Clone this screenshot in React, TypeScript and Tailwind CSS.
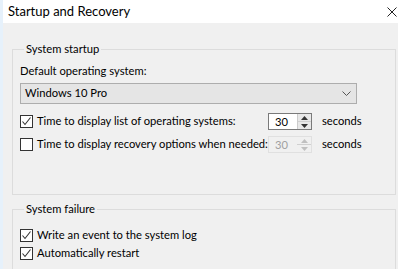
import React from "react";

function CheckBox({ checked }: { checked: boolean }) {
  return (
    <div className="w-[13px] h-[13px] border border-[#333333] bg-white flex items-center justify-center shrink-0">
      {checked && (
        <svg width="11" height="11" viewBox="0 0 11 11">
          <polyline
            points="1.5,5.5 4,8.5 9.5,1.5"
            fill="none"
            stroke="#333333"
            strokeWidth="1.1"
          />
        </svg>
      )}
    </div>
  );
}

function SpinBox({ disabled }: { disabled?: boolean }) {
  const arrow = disabled ? "#c0c0c0" : "#333333";
  return (
    <div
      className={`w-[44px] h-[17px] flex shrink-0 ${
        disabled ? "border border-[#e0e0e0] bg-[#f0f0f0]" : "border border-[#7a7a7a] bg-white"
      }`}
    >
      <div
        className={`flex-1 pl-[6px] leading-[15px] ${
          disabled ? "text-[#a0a0a0]" : "text-black"
        }`}
      >
        30
      </div>
      <div
        className={`w-[14px] flex flex-col ${
          disabled ? "bg-[#f0f0f0]" : "bg-[#e8e8e8] border-l border-[#cccccc]"
        }`}
      >
        <div className="flex-1 flex items-center justify-center border-b border-[#d0d0d0]">
          <svg width="7" height="4" viewBox="0 0 7 4">
            <polygon points="0,4 3.5,0 7,4" fill={arrow} />
          </svg>
        </div>
        <div className="flex-1 flex items-center justify-center">
          <svg width="7" height="4" viewBox="0 0 7 4">
            <polygon points="0,0 3.5,4 7,0" fill={arrow} />
          </svg>
        </div>
      </div>
    </div>
  );
}

export default function App() {
  return (
    <div
      className="w-[398px] h-[269px] overflow-hidden bg-[#f0f0f0] border-l-[3px] border-[#e6f1fb] text-[11.2px] text-black"
      style={{ fontFamily: 'Lato, "Liberation Sans", sans-serif' }}
    >
      <div className="h-[23px] bg-white flex items-center justify-between pl-[5px] pr-[1px]">
        <span className="text-[13px] leading-none">Startup and Recovery</span>
        <svg width="10" height="10" viewBox="0 0 10 10">
          <path d="M0.5 0.5 L9.5 9.5 M9.5 0.5 L0.5 9.5" stroke="#222" strokeWidth="1" />
        </svg>
      </div>

      <div className="pl-[9px] pr-[2px] pt-[18px]">
        <fieldset className="min-w-0 border border-[#dcdcdc] h-[154px] pl-[7px] pr-[38px]">
          <legend className="ml-[4px] px-[2px] leading-[16px]">System startup</legend>
          <div className="mt-[6px] leading-[16px]">Default operating system:</div>
          <div className="mt-[4px] h-[21px] border border-[#adadad] bg-[#e5e5e5] flex items-center justify-between pl-[4px] pr-[5px]">
            <span>Windows 10 Pro</span>
            <svg width="9" height="5" viewBox="0 0 9 5">
              <polyline points="0.5,0.5 4.5,4.5 8.5,0.5" fill="none" stroke="#555" strokeWidth="1" />
            </svg>
          </div>
          <div className="mt-[9px] h-[17px] flex items-center whitespace-nowrap">
            <CheckBox checked />
            <span className="ml-[4px] w-[231px] shrink-0">Time to display list of operating systems:</span>
            <SpinBox />
            <span className="ml-[10px]">seconds</span>
          </div>
          <div className="mt-[6px] h-[17px] flex items-center whitespace-nowrap">
            <CheckBox checked={false} />
            <span className="ml-[4px] w-[231px] shrink-0">Time to display recovery options when needed:</span>
            <SpinBox disabled />
            <span className="ml-[10px]">seconds</span>
          </div>
        </fieldset>

        <fieldset className="min-w-0 mt-[6px] border border-[#dcdcdc] h-[80px] pl-[7px]">
          <legend className="ml-[4px] px-[2px] leading-[16px]">System failure</legend>
          <div className="mt-[10px] h-[16px] flex items-center">
            <CheckBox checked />
            <span className="ml-[4px]">Write an event to the system log</span>
          </div>
          <div className="mt-[2px] h-[16px] flex items-center">
            <CheckBox checked />
            <span className="ml-[4px]">Automatically restart</span>
          </div>
        </fieldset>
      </div>
    </div>
  );
}
